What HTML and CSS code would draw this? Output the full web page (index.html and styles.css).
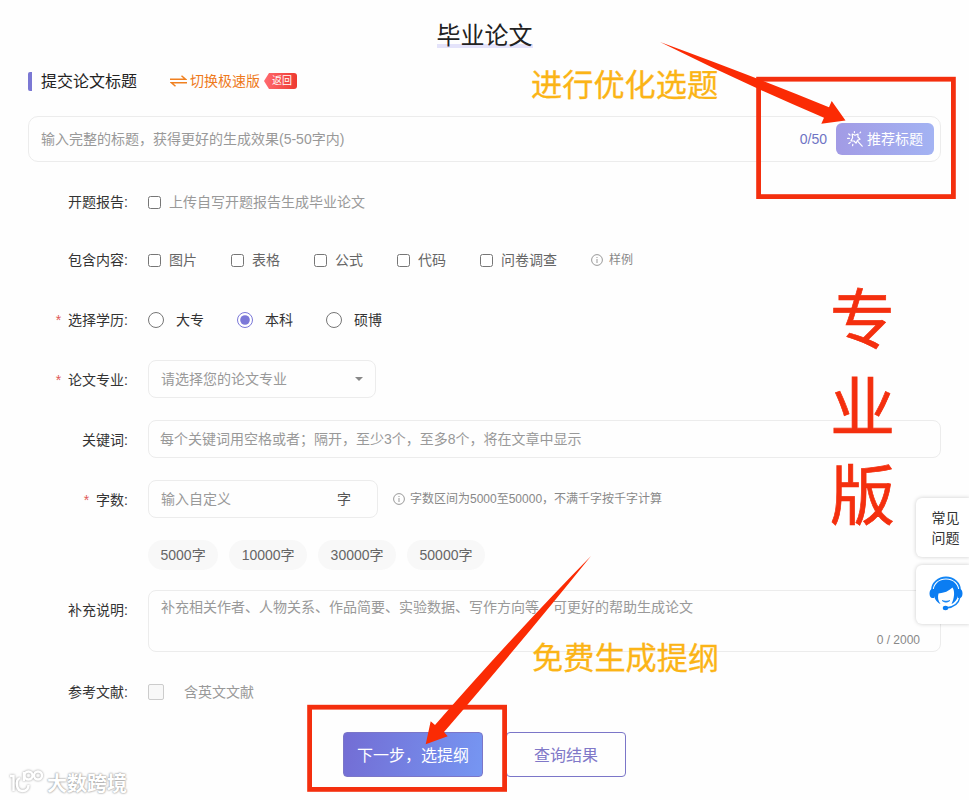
FILE: index.html
```html
<!DOCTYPE html>
<html lang="zh-CN">
<head>
    <meta charset="UTF-8">
    <meta name="viewport" content="width=device-width, initial-scale=1.0">
    <title>毕业论文</title>
    <link rel="stylesheet" href="styles.css">
</head>
<body>
    <div class="container">
        <h1><span>毕业论文</span></h1>

        <div class="section-head">
            <h2>提交论文标题</h2>
            <a class="switch">
                <svg width="17" height="12" viewBox="0 0 17 12" fill="none" stroke="#f08020" stroke-width="1.5">
                    <path d="M0 4.2H15.500L11.500 0.800M17 7.800H1.500L5.500 11.200"/>
                </svg>
                切换极速版
            </a>
            <span class="tag">返回</span>
        </div>

        <div class="title-box">
            <input type="text" placeholder="输入完整的标题，获得更好的生成效果(5-50字内)">
            <span class="count">0/50</span>
            <button type="button" class="recommend">
                <svg width="16" height="16" viewBox="0 0 16 16" fill="none" stroke="#fff" stroke-width="1.2" stroke-linecap="round" stroke-linejoin="round">
                    <path d="M5.200 3L8 4.300L11 3L10.900 6L13 8.200L10.400 9.400L9 12.200L7 10L4 9.800L5.600 6.800Z"/>
                    <path d="M10.800 10.400L15.200 15.200M7.400 .6V1.600M1.800 3L3 4M.6 7.400H2.400M1.800 12.400L3.200 11.400M13 1.800L13.600 1.200M5.800 13.400L5.600 14.600"/>
                </svg>
                推荐标题
            </button>
        </div>

        <form id="paperForm">
            <div class="row row-first">
                <label class="name">开题报告:</label>
                <label class="check light"><input type="checkbox">上传自写开题报告生成毕业论文</label>
            </div>
            <div class="row row-content">
                <label class="name">包含内容:</label>
                <div class="checks">
                    <label class="check"><input type="checkbox">图片</label>
                    <label class="check"><input type="checkbox">表格</label>
                    <label class="check"><input type="checkbox">公式</label>
                    <label class="check"><input type="checkbox">代码</label>
                    <label class="check"><input type="checkbox">问卷调查</label>
                    <span class="tip">
                        <svg width="12" height="12" viewBox="0 0 12 12" fill="none" stroke="#999"><circle cx="6" cy="6" r="5.4"/><path d="M6 5V9M6 3V4"/></svg>
                        样例
                    </span>
                </div>
            </div>
            <div class="row">
                <label class="name"><i>*</i>选择学历:</label>
                <div class="radios">
                    <label><input type="radio" name="degree">大专</label>
                    <label><input type="radio" name="degree" checked>本科</label>
                    <label><input type="radio" name="degree">硕博</label>
                </div>
            </div>
            <div class="row row-input">
                <label class="name"><i>*</i>论文专业:</label>
                <div class="field select">
                    <span>请选择您的论文专业</span>
                    <b class="caret"></b>
                </div>
            </div>
            <div class="row row-input">
                <label class="name">关键词:</label>
                <input class="field keywords" type="text" placeholder="每个关键词用空格或者；隔开，至少3个，至多8个，将在文章中显示">
            </div>
            <div class="row row-input">
                <label class="name"><i>*</i>字数:</label>
                <div class="field words">
                    <input type="text" placeholder="输入自定义">
                    <span>字</span>
                </div>
                <span class="tip">
                    <svg width="12" height="12" viewBox="0 0 12 12" fill="none" stroke="#999"><circle cx="6" cy="6" r="5.4"/><path d="M6 5V9M6 3V4"/></svg>
                    字数区间为5000至50000，不满千字按千字计算
                </span>
            </div>
            <div class="chips">
                <span>5000字</span>
                <span>10000字</span>
                <span>30000字</span>
                <span>50000字</span>
            </div>
            <div class="row row-area">
                <label class="name">补充说明:</label>
                <div class="field area">
                    <p>补充相关作者、人物关系、作品简要、实验数据、写作方向等，可更好的帮助生成论文</p>
                    <span>0 / 2000</span>
                </div>
            </div>
            <div class="row row-ref">
                <label class="name">参考文献:</label>
                <label class="check light ref"><span class="box"></span>含英文文献</label>
            </div>
            <div class="buttons">
                <button type="button" class="next">下一步，选提纲</button>
                <button type="button" class="query">查询结果</button>
            </div>
        </form>
    </div>

    <!-- hand-drawn notes over the form -->
    <svg class="marks" width="969" height="800" viewBox="0 0 969 800">
        <g fill="none" stroke="#f42f0e" stroke-width="4.8">
            <rect x="758.6" y="79.2" width="194.8" height="117.4"/>
            <rect x="309.6" y="707.2" width="195" height="82.2"/>
        </g>
        <g fill="#fb2b04">
            <path d="M660 42Q750 75 829 107.3L831.7 101L845.5 120.5L821.3 123.7L824 117.7Q740 82 660 42Z"/>
            <path d="M591 556Q520 628 435 725L430.7 721.3L425.7 744.3L447.7 736.3L444 732Q525 638 591 556Z"/>
        </g>
    </svg>
    <div class="note note-top">进行优化选题</div>
    <div class="note note-bottom">免费生成提纲</div>
    <div class="edition">专<br>业<br>版</div>

    <div class="side">
        <a class="faq">常见<br>问题</a>
        <a class="service">
            <svg width="34" height="35" viewBox="0 0 34 35">
                <path d="M3 14A14 12.500 0 0 1 31 14" fill="none" stroke="#1285f5" stroke-width="1.800"/>
                <path d="M5 13H3.500C1.500 13 .5 15 .5 17.500S1.500 22 3.500 22H5ZM29 13H30.500C32.500 13 33.500 15 33.500 17.500S32.500 22 30.500 22H29Z" fill="#0b7df2"/>
                <path d="M17 3.500C9 3.500 4.500 9 4.500 16C4.500 21.500 7 26 11.500 28C9 25 8.500 21 9.500 17.500C15 17 20 15 23.500 11.500C26 15 25.500 22 22.500 28C27 26 29.500 21.500 29.500 16C29.500 9 25 3.500 17 3.500Z" fill="#0b7df2"/>
                <path d="M13 24.500Q17 28 21 24.500Q17 26 13 24.500Z" fill="#0b7df2" stroke="#0b7df2" stroke-width=".6"/>
                <path d="M31 21Q29 31 17 32" fill="none" stroke="#1285f5" stroke-width="1.300"/>
                <ellipse cx="16.500" cy="32" rx="2.700" ry="2.200" fill="#0b7df2"/>
            </svg>
        </a>
    </div>

    <div class="watermark">
        <svg width="36" height="26" viewBox="0 0 36 26" fill="none" stroke="#fff" stroke-width="2.400">
            <path d="M1 7H4.500V22M11 9C6 11 7 22 13.500 22C17.500 22 19.500 19.500 19.500 16M15 3V12"/>
            <circle cx="19.500" cy="6.500" r="4"/>
            <circle cx="29" cy="6.500" r="4"/>
        </svg>
        <span>大数跨境</span>
    </div>
</body>
</html>
```
FILE: styles.css
```css
* {
    box-sizing: border-box;
}
body {
    margin: 0;
    position: relative;
    height: 800px;
    overflow: hidden;
    background: #fefefe;
    color: #333;
    font: 14px/20px "Liberation Sans", "Noto Sans CJK SC", sans-serif;
}
input, button {
    font: inherit;
}
input::placeholder {
    color: #999;
    opacity: 1;
}
.container {
    padding: 0 28px;
}
h1 {
    margin: 0;
    padding-top: 19px;
    font-size: 24px;
    line-height: 34px;
    font-weight: normal;
    text-align: center;
    color: #222;
}
h1 span {
    display: inline-block;
    height: 30px;
    background: linear-gradient(#e4e3fa, #e4e3fa) 0 25px / 100% 4px no-repeat;
}

/* section heading */
.section-head {
    display: flex;
    align-items: center;
    height: 20px;
    margin-top: 18px;
}
h2 {
    margin: 0;
    padding-left: 9px;
    border-left: 4px solid #7b78d4;
    border-radius: 2px;
    font-size: 16px;
    line-height: 19px;
    font-weight: normal;
    color: #222;
}
.switch {
    display: flex;
    align-items: center;
    gap: 3px;
    margin-left: 33px;
    color: #ee7a1c;
}
.tag {
    width: 33px;
    height: 16px;
    margin-left: 4px;
    padding-left: 3px;
    border-radius: 3px;
    background: linear-gradient(90deg, #ff6a70, #ee3a30);
    clip-path: polygon(0 50%, 5px 0, 100% 0, 100% 100%, 5px 100%);
    color: #fff;
    font-size: 10px;
    line-height: 16px;
    text-align: center;
}
.title-box {
    display: flex;
    align-items: center;
    height: 46px;
    margin-top: 25px;
    padding: 0 6px 0 12px;
    border: 1px solid #ececec;
    border-radius: 10px;
}
.title-box input {
    flex: 1;
    padding: 0;
    border: none;
    background: none;
}
.count {
    color: #6f74c4;
}
.recommend {
    display: flex;
    align-items: center;
    justify-content: center;
    gap: 4px;
    width: 98px;
    height: 32px;
    margin-left: 9px;
    padding: 0;
    border: none;
    border-radius: 6px;
    background: linear-gradient(90deg, #a29be5, #a3b3f3);
    color: #fff;
}

/* form rows */
.row {
    display: flex;
    align-items: center;
    height: 60px;
}
.row-first {
    height: 58px;
    margin-top: 11px;
}
.row-content {
    height: 59px;
}
.row-content .name {
    margin-bottom: 1px;
}
.name {
    width: 100px;
    margin-right: 20px;
    text-align: right;
}
.name i {
    margin-right: 7px;
    color: #e05a5a;
    font-style: normal;
}
.check {
    display: flex;
    align-items: center;
    color: #666;
}
.check input {
    width: 13px;
    height: 13px;
    margin: 0 8px 0 0;
}
.light {
    color: #999;
}
.checks {
    display: flex;
    align-items: center;
    gap: 34px;
    margin-bottom: 1px;
}
.radios {
    display: flex;
    gap: 33px;
}
.radios label {
    display: flex;
    align-items: center;
}
.radios input {
    width: 16px;
    height: 16px;
    margin: 0 12px 0 0;
    accent-color: #7b78d8;
}
.tip {
    display: flex;
    align-items: center;
    gap: 6px;
    color: #888;
    font-size: 12px;
}
.field {
    display: flex;
    align-items: center;
    height: 38px;
    padding: 0 12px;
    border: 1px solid #ececec;
    border-radius: 8px;
    background: none;
    color: #999;
}
.row-input .field {
    margin-bottom: 2px;
}
.row-input .tip {
    margin: 0 0 3px 15px;
    gap: 5px;
}
.select {
    justify-content: space-between;
    width: 228px;
}
.caret {
    border: 4px solid transparent;
    border-top: 4px solid #888;
    border-bottom: none;
}
.keywords {
    flex: 1;
    padding: 0 11px;
}
.words {
    width: 230px;
}
.words input {
    width: 176px;
    padding: 0;
    border: none;
    background: none;
}
.words span {
    color: #555;
}
.chips {
    display: flex;
    gap: 11px;
    margin: 10px 0 20px 120px;
}
.chips span {
    height: 30px;
    padding: 0 12.5px;
    border-radius: 15px;
    background: #f8f8f8;
    color: #666;
    line-height: 30px;
}
.row-area {
    height: 62px;
    align-items: flex-start;
}
.row-area .name {
    padding-top: 10px;
}
.area {
    flex: 1;
    flex-direction: column;
    align-items: flex-start;
    justify-content: space-between;
    height: 62px;
    padding: 6px 20px 1px 12px;
}
.area p {
    margin: 0;
}
.area span {
    align-self: flex-end;
    color: #888;
    font-size: 12px;
}
.row-ref {
    height: 80px;
}
.ref .box {
    width: 16px;
    height: 16px;
    margin-right: 20px;
    border: 1px solid #ccc;
    border-radius: 2px;
    background: #f8f8f8;
}
.buttons {
    display: flex;
    gap: 23px;
    padding-left: 315px;
}
.buttons button {
    height: 45px;
    padding: 2px 0 0;
    border: 1px solid #7b76c8;
    border-radius: 4px;
    font-size: 16px;
}
.next {
    width: 140px;
    background: linear-gradient(100deg, #736dd4, #7696f2);
    color: #fff;
}
.query {
    width: 120px;
    background: none;
    color: #8078c8;
}

/* notes on top of the page */
.marks {
    position: absolute;
    top: 0;
    left: 0;
}
.note {
    position: absolute;
    left: 531px;
    color: #fbb416;
    font-size: 31.2px;
    line-height: 40px;
    white-space: nowrap;
    -webkit-text-stroke: 0.3px #fbb416;
}
.note-top {
    top: 66px;
}
.note-bottom {
    top: 639px;
    left: 532px;
}
.edition {
    position: absolute;
    top: 277px;
    left: 830px;
    color: #f42f0e;
    font-size: 65px;
    line-height: 88px;
    -webkit-text-stroke: 0.7px #f42f0e;
}
.side {
    position: absolute;
    top: 498px;
    right: -1px;
    width: 54px;
}
.side a {
    display: flex;
    align-items: center;
    justify-content: center;
    height: 59px;
    margin-bottom: 8px;
    padding-left: 5px;
    border-radius: 6px 0 0 6px;
    background: #fff;
    box-shadow: 0 0 4px rgba(0, 0, 0, 0.2);
}
.service {
    padding-bottom: 2px;
}
.watermark {
    position: absolute;
    left: 9px;
    top: 769px;
    display: flex;
    align-items: center;
    gap: 2px;
    color: #fff;
    font-size: 20px;
    line-height: 26px;
    font-weight: bold;
    text-shadow: 0 0 2px #999, 0 0 2px #aaa;
}
.watermark svg {
    margin-bottom: 4px;
    filter: drop-shadow(0 0 1px #999);
}
```
